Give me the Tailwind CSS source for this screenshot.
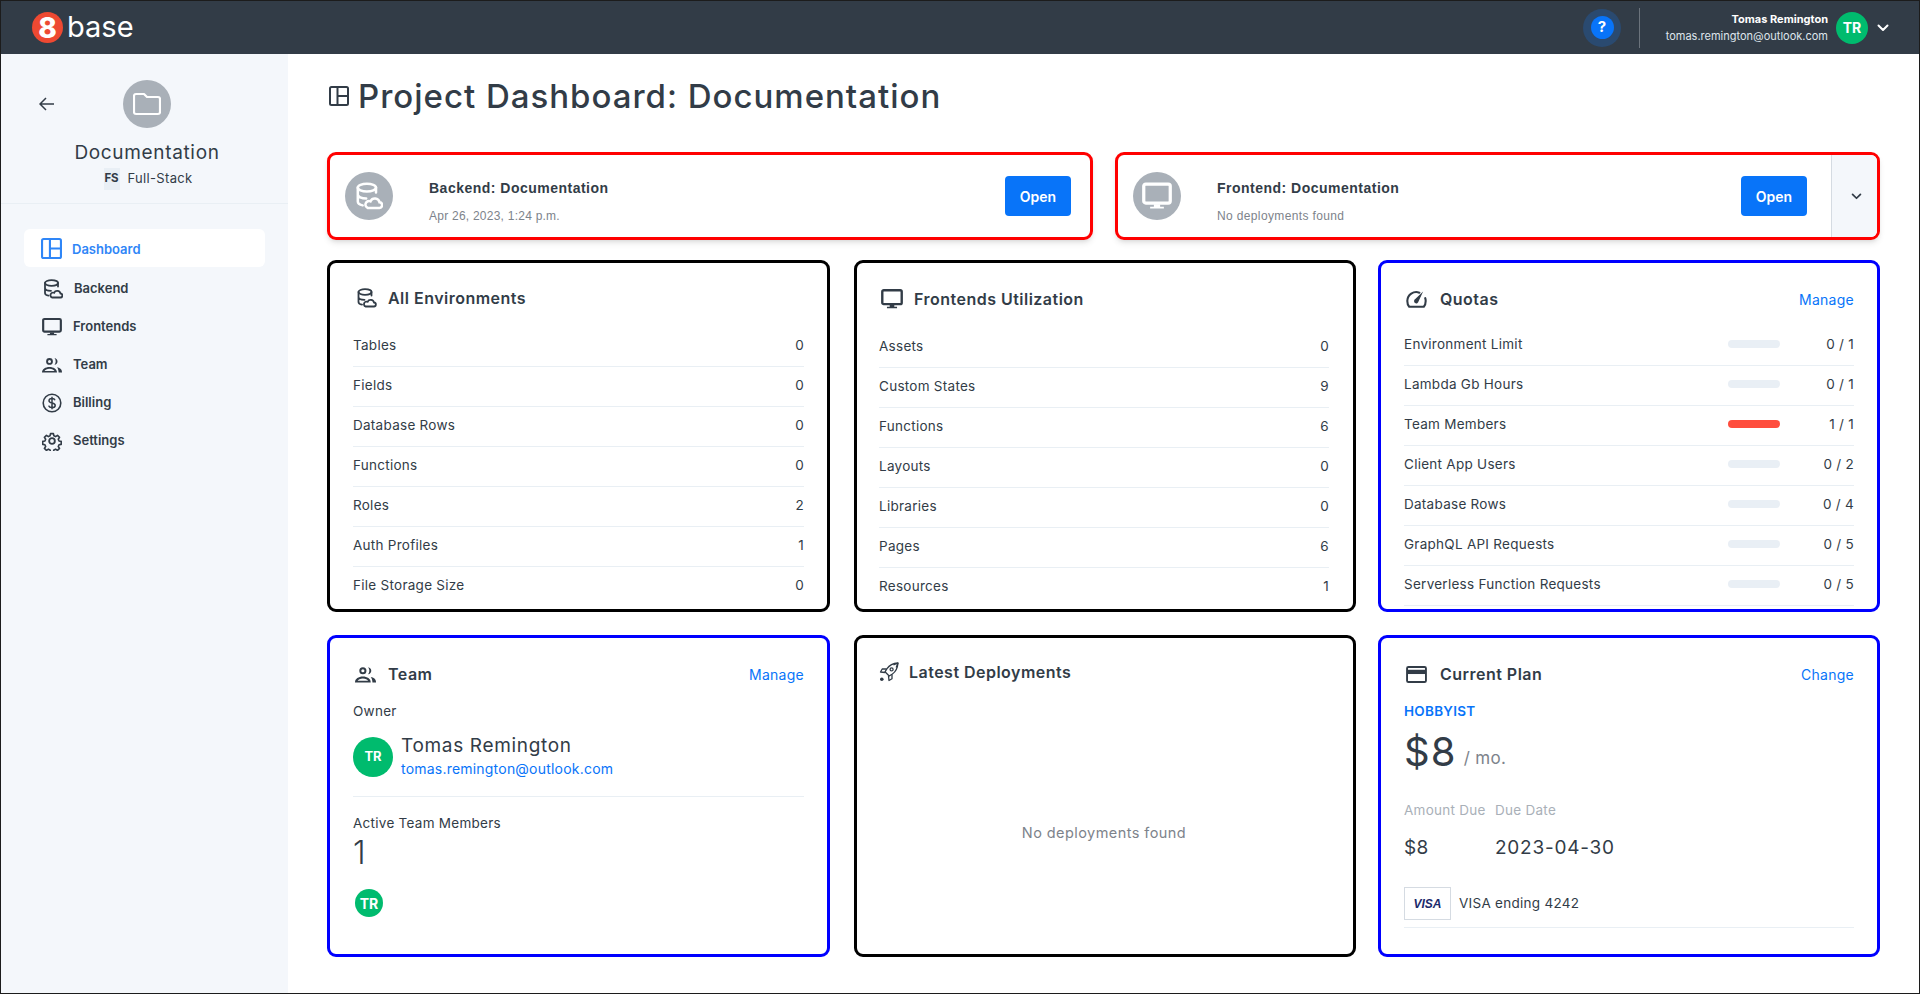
<!DOCTYPE html>
<html lang="en">
<head>
    <meta charset="UTF-8" />
    <meta name="viewport" content="width=device-width, initial-scale=1.0" />
    <title>Project Dashboard: Documentation</title>
    <script src="https://cdn.jsdelivr.net/npm/@tailwindcss/browser@4"></script>
</head>
<body class="bg-white">

<!-- Shared icons -->
<svg class="hidden">
    <symbol id="i-layout" viewBox="0 0 20 20"><rect x="1" y="1" width="18" height="18" rx="1.5" fill="none" stroke="currentColor" stroke-width="2"/><path d="M8.5 1v18M8.5 10H19" fill="none" stroke="currentColor" stroke-width="2"/></symbol>
    <symbol id="i-db" viewBox="0 0 20 20"><g fill="none" stroke="currentColor" stroke-width="1.800" stroke-linecap="round"><ellipse cx="8.500" cy="4" rx="6.500" ry="2.800"/><path d="M2 4v10c0 1.500 1.600 2.400 3.500 2.700M15 4v3.500M2 9c0 1.600 2.600 2.800 6 2.800"/><path d="M9 18.500h8.200a2 2 0 0 0 .3-4 3.400 3.400 0 0 0-6.400-.7A2.400 2.400 0 0 0 9 18.500z"/></g></symbol>
    <symbol id="i-monitor" viewBox="0 0 24 24"><rect x="1.400" y="2.400" width="21.200" height="15.200" rx="1.600" fill="none" stroke="currentColor" stroke-width="2.600"/><path d="M9.500 18.500h5v2h3v1.500h-11v-1.500h3z" fill="currentColor"/></symbol>
    <symbol id="i-team" viewBox="0 0 20 16"><g fill="currentColor" fill-rule="evenodd"><path d="M7.500 1a3.400 3.400 0 1 1 0 6.800 3.400 3.400 0 0 1 0-6.800zm0 1.900a1.500 1.500 0 1 0 0 3 1.500 1.500 0 0 0 0-3z"/><path d="M12.500 1c1.800.3 3 1.700 3 3.400s-1.200 3.100-3 3.400c.8-1 1.200-2.200 1.200-3.400S13.300 2 12.500 1z"/><path d="M0 15.500c0-3.400 3.400-5.500 7.500-5.500s7.500 2.100 7.500 5.500zm2.500-1.500h10c-.5-1.300-2.600-2.300-5-2.300s-4.500 1-5 2.300z"/><path d="M15 10.300c2.700.5 5 1.900 5 4.700v.5h-3.400c0-2-.5-3.800-1.600-5.200z"/></g></symbol>
    <symbol id="i-dollar" viewBox="0 0 20 20"><circle cx="10" cy="10" r="8.800" fill="none" stroke="currentColor" stroke-width="1.600"/><path d="M13 7.300C12.600 6 11.500 5.500 10 5.500c-1.700 0-3 .8-3 2.200 0 3.200 6.200 1.500 6.200 4.700 0 1.400-1.400 2.200-3.200 2.200-1.700 0-2.900-.7-3.300-2M10 3.800v12.400" fill="none" stroke="currentColor" stroke-width="1.500"/></symbol>
    <symbol id="i-gear" viewBox="0 0 24 24"><g fill="none" stroke="currentColor" stroke-width="2.200" stroke-linejoin="round"><circle cx="12" cy="12" r="3.400"/><path d="M10 2h4l.6 3 2.300 1 2.600-1.700 2.800 2.800-1.700 2.600 1 2.300 3 .6v4l-3 .6-1 2.300 1.700 2.600-2.800 2.800-2.600-1.700-2.300 1-.6 3h-4l-.6-3-2.300-1-2.600 1.700-2.800-2.800 1.700-2.600-1-2.300-3-.6v-4l3-.6 1-2.300L1.700 7.100l2.800-2.800L7.100 6l2.300-1z" transform="translate(1.400 1.400) scale(.88)"/></g></symbol>
    <symbol id="i-gauge" viewBox="0 0 22 19"><g fill="none" stroke="currentColor" stroke-width="2.200" stroke-linecap="round"><path d="M14 2.800A9.500 9.500 0 0 0 1.300 11.500c0 2.500.7 4.700 2 6.200h15.400c1.300-1.500 2-3.700 2-6.200 0-1-.2-2-.5-2.900"/></g><path d="M18 1.500l-4.800 10.500a2.400 2.400 0 1 1-3.500-2.400z" fill="currentColor"/></symbol>
    <symbol id="i-card" viewBox="0 0 22 18"><rect x="1" y="1" width="20" height="16" rx="1.500" fill="none" stroke="currentColor" stroke-width="2"/><rect x="1" y="4" width="20" height="4.500" fill="currentColor"/></symbol>
    <symbol id="i-rocket" viewBox="0 0 20 20"><g fill="none" stroke="currentColor" stroke-width="1.300" stroke-linejoin="round"><path d="M19 1c-5 .4-8.600 2.200-11 5.600l-2 3.200 4.200 4.200 3.200-2C16.800 9.600 18.600 6 19 1z"/><path d="M19 1l-4.500 1.800M19 1l-1.800 4.500M7.500 7H3.200L1.500 10l4.500.5M13 12.500v4.300L10 18.500l-.5-4.500"/><circle cx="12.600" cy="7.400" r="1.500"/></g><circle cx="2.800" cy="17.200" r="1.800" fill="currentColor"/></symbol>
    <symbol id="i-chevron" viewBox="0 0 12 8"><path d="M1.500 1.500L6 6l4.500-4.500" fill="none" stroke="currentColor" stroke-width="2" stroke-linecap="round" stroke-linejoin="round"/></symbol>
</svg>

<div class="flex flex-col w-[1920px] h-[994px] overflow-hidden border border-[#1c1c1c] font-[Inter,sans-serif] text-[#323c47]">

    <!-- Top bar -->
    <header class="h-[53px] shrink-0 flex items-center bg-[#323c47] pl-[31px] pr-[30px] text-white">
        <div class="flex items-center">
            <div class="w-[31px] h-[31px] rounded-full bg-[#ee4932] flex items-center justify-center text-[28px] leading-none font-extrabold">8</div>
            <span class="ml-[4px] text-[29px] leading-none pb-[2px]">base</span>
        </div>
        <div class="ml-auto flex items-center">
            <div class="w-[38px] h-[38px] rounded-full bg-[#2a4a70] flex items-center justify-center">
                <div class="w-[23px] h-[23px] rounded-full bg-[#0874f9] flex items-center justify-center text-[15px] font-bold">?</div>
            </div>
            <div class="w-px h-[40px] bg-[#6b737c] ml-[18px]"></div>
            <div class="ml-auto w-[188px] text-right leading-none">
                <div class="text-[11px] font-bold">Tomas Remington</div>
                <div class="text-[11px] mt-[6px] text-[#dfe5ec]">tomas.remington@outlook.com</div>
            </div>
            <div class="ml-[8px] w-[32px] h-[32px] rounded-full bg-[#00bb6e] flex items-center justify-center text-[14px] font-bold">TR</div>
            <svg class="ml-[9px] w-[12px] h-[8px] text-white"><use href="#i-chevron"/></svg>
        </div>
    </header>

    <div class="flex flex-1 min-h-0">

        <!-- Sidebar -->
        <aside class="w-[287px] shrink-0 bg-[#f4f7fb]">
            <div class="h-[150px] border-b border-[#e9eff4]">
                <div class="flex items-center pt-[26px] pl-[38px]">
                    <svg class="w-[16px] h-[14px] text-[#323c47]" viewBox="0 0 16 14"><path d="M15 7H1.500M7 1L1 7l6 6" fill="none" stroke="currentColor" stroke-width="1.500"/></svg>
                    <div class="ml-[68px] w-[48px] h-[48px] rounded-full bg-[#a9b0b8] flex items-center justify-center">
                        <svg class="w-[28px] h-[24px] text-white" viewBox="0 0 28 24"><path d="M3 2h8l3 3h11a2 2 0 0 1 2 2v13a2 2 0 0 1-2 2H3a2 2 0 0 1-2-2V4a2 2 0 0 1 2-2z" fill="none" stroke="currentColor" stroke-width="2.200" stroke-linejoin="round"/></svg>
                    </div>
                </div>
                <div class="mt-[13px] pl-[5px] text-center text-[19px] leading-[24px] tracking-[0.035em]">Documentation</div>
                <div class="mt-[3px] pl-[7px] flex items-center justify-center">
                    <span class="w-[16px] h-[22px] bg-[#e9eff5] flex items-center justify-center text-[11.500px] font-bold">FS</span>
                    <span class="ml-[8px] text-[13px] tracking-[0.025em]">Full-Stack</span>
                </div>
            </div>
            <nav class="mt-[25px] px-[23px] flex flex-col text-[13px] font-semibold">
                <a class="h-[38px] pl-[17px] flex items-center gap-[10px] bg-white rounded-md text-[#2f86f7]"><svg class="w-[21px] h-[21px]"><use href="#i-layout"/></svg><span class="pt-[3px]">Dashboard</span></a>
                <a class="mt-[3px] h-[38px] pl-[19px] flex items-center gap-[11px]"><svg class="w-[20px] h-[20px]"><use href="#i-db"/></svg>Backend</a>
                <a class="h-[38px] pl-[18px] flex items-center gap-[11px]"><svg class="w-[20px] h-[20px]"><use href="#i-monitor"/></svg>Frontends</a>
                <a class="h-[38px] pl-[18px] flex items-center gap-[11px]"><svg class="w-[20px] h-[16px]"><use href="#i-team"/></svg>Team</a>
                <a class="h-[38px] pl-[18px] flex items-center gap-[11px]"><svg class="w-[20px] h-[20px]"><use href="#i-dollar"/></svg>Billing</a>
                <a class="h-[38px] pl-[18px] flex items-center gap-[11px]"><svg class="w-[20px] h-[20px]"><use href="#i-gear"/></svg>Settings</a>
            </nav>
        </aside>

        <!-- Main content -->
        <main class="flex-1 pl-[39px] pr-[39px]">
            <div class="h-[98px] flex items-start pt-[24px] pl-[2px]">
                <svg class="w-[20px] h-[20px] mt-[8px] text-[#323c47]"><use href="#i-layout"/></svg>
                <h1 class="ml-[9px] text-[33px] leading-[36px] font-medium tracking-[0.03em]">Project Dashboard: Documentation</h1>
            </div>

            <!-- Deploy cards -->
            <div class="flex gap-[22px]">
                <div class="w-[766px] h-[88px] flex items-center border-[3px] border-[#ff0000] rounded-[9px] shadow-md pl-[15px] pr-[19px]">
                    <div class="w-[48px] h-[48px] rounded-full bg-[#a9b0b8] flex items-center justify-center text-white"><svg class="w-[28px] h-[28px]"><use href="#i-db"/></svg></div>
                    <div class="ml-[36px] pt-[10px] font-[Liberation_Sans,sans-serif]">
                        <div class="text-[14px] font-bold tracking-[0.035em] leading-[18px]">Backend: Documentation</div>
                        <div class="mt-[11px] text-[12px] text-[#7d838b] tracking-[0.02em] leading-[16px]">Apr 26, 2023, 1:24 p.m.</div>
                    </div>
                    <button class="ml-auto w-[66px] h-[40px] rounded bg-[#0874f9] text-white text-[14px] font-semibold">Open</button>
                </div>
                <div class="flex-1 h-[88px] flex items-center border-[3px] border-[#ff0000] rounded-[9px] shadow-md pl-[15px] overflow-hidden">
                    <div class="w-[48px] h-[48px] rounded-full bg-[#a9b0b8] flex items-center justify-center text-white"><svg class="w-[30px] h-[30px]"><use href="#i-monitor"/></svg></div>
                    <div class="ml-[36px] pt-[10px] font-[Liberation_Sans,sans-serif]">
                        <div class="text-[14px] font-bold tracking-[0.035em] leading-[18px]">Frontend: Documentation</div>
                        <div class="mt-[11px] text-[12px] text-[#7d838b] tracking-[0.03em] leading-[16px]">No deployments found</div>
                    </div>
                    <button class="ml-auto w-[66px] h-[40px] rounded bg-[#0874f9] text-white text-[14px] font-semibold">Open</button>
                    <div class="ml-[24px] w-[46px] h-full pl-[3px] bg-[#f4f7fb] border-l border-[#d5dbe2] flex items-center justify-center">
                        <svg class="w-[11px] h-[7px] text-[#323c47]"><use href="#i-chevron"/></svg>
                    </div>
                </div>
            </div>

            <!-- Stat cards -->
            <div class="mt-[20px] grid grid-cols-[503px_503px_501px] grid-rows-[352px_322px] gap-x-[23px] gap-y-[23px] text-[13.500px] tracking-[0.02em]">

                <section class="border-[3px] border-black rounded-[9px] pt-[15px] pl-[23px] pr-[23px]">
                    <div class="h-[40px] mb-[9px] flex items-center pl-[3px]">
                        <svg class="w-[21px] h-[20px]"><use href="#i-db"/></svg>
                        <h2 class="ml-[11px] text-[16px] font-semibold tracking-[0.03em]">All Environments</h2>
                    </div>
                    <div class="h-[40px] pb-[3px] flex items-center justify-between border-b border-[#e9eff4]"><span>Tables</span><span>0</span></div>
                    <div class="h-[40px] pb-[3px] flex items-center justify-between border-b border-[#e9eff4]"><span>Fields</span><span>0</span></div>
                    <div class="h-[40px] pb-[3px] flex items-center justify-between border-b border-[#e9eff4]"><span>Database Rows</span><span>0</span></div>
                    <div class="h-[40px] pb-[3px] flex items-center justify-between border-b border-[#e9eff4]"><span>Functions</span><span>0</span></div>
                    <div class="h-[40px] pb-[3px] flex items-center justify-between border-b border-[#e9eff4]"><span>Roles</span><span>2</span></div>
                    <div class="h-[40px] pb-[3px] flex items-center justify-between border-b border-[#e9eff4]"><span>Auth Profiles</span><span>1</span></div>
                    <div class="h-[40px] pb-[3px] flex items-center justify-between"><span>File Storage Size</span><span>0</span></div>
                </section>

                <section class="ml-[1px] border-[3px] border-black rounded-[9px] pt-[16px] pl-[22px] pr-[24px]">
                    <div class="h-[40px] mb-[9px] flex items-center">
                        <svg class="w-[24px] h-[22px] ml-[1px]"><use href="#i-monitor"/></svg>
                        <h2 class="ml-[10px] text-[16px] font-semibold tracking-[0.03em]">Frontends Utilization</h2>
                    </div>
                    <div class="h-[40px] pb-[3px] flex items-center justify-between border-b border-[#e9eff4]"><span>Assets</span><span>0</span></div>
                    <div class="h-[40px] pb-[3px] flex items-center justify-between border-b border-[#e9eff4]"><span>Custom States</span><span>9</span></div>
                    <div class="h-[40px] pb-[3px] flex items-center justify-between border-b border-[#e9eff4]"><span>Functions</span><span>6</span></div>
                    <div class="h-[40px] pb-[3px] flex items-center justify-between border-b border-[#e9eff4]"><span>Layouts</span><span>0</span></div>
                    <div class="h-[40px] pb-[3px] flex items-center justify-between border-b border-[#e9eff4]"><span>Libraries</span><span>0</span></div>
                    <div class="h-[40px] pb-[3px] flex items-center justify-between border-b border-[#e9eff4]"><span>Pages</span><span>6</span></div>
                    <div class="h-[40px] pb-[3px] flex items-center justify-between"><span>Resources</span><span>1</span></div>
                </section>

                <section class="-ml-[1px] border-[3px] border-[#0000ff] rounded-[9px] pt-[16px] pl-[23px] pr-[23px]">
                    <div class="h-[40px] mb-[7px] flex items-center pl-[2px]">
                        <svg class="w-[21px] h-[18px]"><use href="#i-gauge"/></svg>
                        <h2 class="ml-[13px] text-[16px] font-semibold tracking-[0.03em]">Quotas</h2>
                        <a class="ml-auto text-[14px] text-[#0874f9]">Manage</a>
                    </div>
                    <div class="h-[40px] pb-[3px] flex items-center border-b border-[#e9eff4]"><span>Environment Limit</span><span class="ml-auto w-[52px] h-[8px] rounded-full bg-[#e9eff5]"></span><span class="w-[74px] text-right">0 / 1</span></div>
                    <div class="h-[40px] pb-[3px] flex items-center border-b border-[#e9eff4]"><span>Lambda Gb Hours</span><span class="ml-auto w-[52px] h-[8px] rounded-full bg-[#e9eff5]"></span><span class="w-[74px] text-right">0 / 1</span></div>
                    <div class="h-[40px] pb-[3px] flex items-center border-b border-[#e9eff4]"><span>Team Members</span><span class="ml-auto w-[52px] h-[8px] rounded-full bg-[#ff4d3d]"></span><span class="w-[74px] text-right">1 / 1</span></div>
                    <div class="h-[40px] pb-[3px] flex items-center border-b border-[#e9eff4]"><span>Client App Users</span><span class="ml-auto w-[52px] h-[8px] rounded-full bg-[#e9eff5]"></span><span class="w-[74px] text-right">0 / 2</span></div>
                    <div class="h-[40px] pb-[3px] flex items-center border-b border-[#e9eff4]"><span>Database Rows</span><span class="ml-auto w-[52px] h-[8px] rounded-full bg-[#e9eff5]"></span><span class="w-[74px] text-right">0 / 4</span></div>
                    <div class="h-[40px] pb-[3px] flex items-center border-b border-[#e9eff4]"><span>GraphQL API Requests</span><span class="ml-auto w-[52px] h-[8px] rounded-full bg-[#e9eff5]"></span><span class="w-[74px] text-right">0 / 5</span></div>
                    <div class="h-[40px] pb-[3px] flex items-center border-b border-[#e9eff4]"><span>Serverless Function Requests</span><span class="ml-auto w-[52px] h-[8px] rounded-full bg-[#e9eff5]"></span><span class="w-[74px] text-right">0 / 5</span></div>
                </section>

                <section class="border-[3px] border-[#0000ff] rounded-[9px] pt-[16px] pl-[23px] pr-[23px]">
                    <div class="h-[40px] flex items-center pl-[2px]">
                        <svg class="w-[21px] h-[17px]"><use href="#i-team"/></svg>
                        <h2 class="ml-[12px] text-[16px] font-semibold tracking-[0.03em]">Team</h2>
                        <a class="ml-auto text-[14px] text-[#0874f9]">Manage</a>
                    </div>
                    <div class="mt-[7px] leading-[20px]">Owner</div>
                    <div class="mt-[13px] flex items-center">
                        <div class="w-[40px] h-[40px] rounded-full bg-[#00bb6e] flex items-center justify-center text-white text-[13px] font-bold tracking-normal">TR</div>
                        <div class="ml-[8px]">
                            <div class="pt-[1px] text-[19px] leading-[22px] tracking-[0.035em]">Tomas Remington</div>
                            <div class="mt-[2px] text-[14px] leading-[20px] tracking-[0.015em] text-[#0874f9]">tomas.remington@outlook.com</div>
                        </div>
                    </div>
                    <div class="mt-[17px] border-t border-[#e9eff4] pt-[16px] leading-[20px]">Active Team Members</div>
                    <div class="mt-[2px] text-[32px] leading-[36px] font-light">1</div>
                    <div class="mt-[18px] ml-[2px] w-[28px] h-[28px] rounded-full bg-[#00bb6e] flex items-center justify-center text-white text-[14px] font-bold tracking-normal">TR</div>
                </section>

                <section class="ml-[1px] flex flex-col border-[3px] border-black rounded-[9px] pt-[14px] pl-[22px] pr-[24px]">
                    <div class="h-[40px] flex items-center">
                        <svg class="w-[20px] h-[20px]"><use href="#i-rocket"/></svg>
                        <h2 class="ml-[10px] text-[16px] font-semibold tracking-[0.03em]">Latest Deployments</h2>
                    </div>
                    <div class="flex-1 flex items-center justify-center pt-[20px] text-[14.500px] tracking-[0.03em] text-[#7d838b]">No deployments found</div>
                </section>

                <section class="-ml-[1px] border-[3px] border-[#0000ff] rounded-[9px] pt-[16px] pl-[23px] pr-[23px]">
                    <div class="h-[40px] flex items-center pl-[2px]">
                        <svg class="w-[21px] h-[17px]"><use href="#i-card"/></svg>
                        <h2 class="ml-[13px] text-[16px] font-semibold tracking-[0.03em]">Current Plan</h2>
                        <a class="ml-auto text-[14px] text-[#0874f9]">Change</a>
                    </div>
                    <div class="mt-[7px] leading-[20px] font-semibold text-[#0874f9]">HOBBYIST</div>
                    <div class="mt-[7px] flex items-baseline">
                        <span class="text-[40px] leading-[48px] tracking-[0.03em]">$8</span>
                        <span class="ml-[7px] text-[17px] -translate-y-[2px] text-[#7d838b]">/ mo.</span>
                    </div>
                    <div class="mt-[24px] flex text-[#a9b0b8] leading-[20px]">
                        <span class="w-[91px]">Amount Due</span><span>Due Date</span>
                    </div>
                    <div class="mt-[15px] flex text-[19px] leading-[26px]">
                        <span class="w-[91px]">$8</span><span class="tracking-[0.04em]">2023-04-30</span>
                    </div>
                    <div class="mt-[26px] pb-[7px] flex items-center border-b border-[#e9eff4]">
                        <div class="w-[47px] h-[33px] border border-[#d5dbe2] flex items-center justify-center font-[Liberation_Sans,sans-serif] text-[12px] font-bold italic text-[#1a2a6c] tracking-normal">VISA</div>
                        <span class="ml-[8px]">VISA ending 4242</span>
                    </div>
                </section>
            </div>
        </main>
    </div>
</div>

</body>
</html>
